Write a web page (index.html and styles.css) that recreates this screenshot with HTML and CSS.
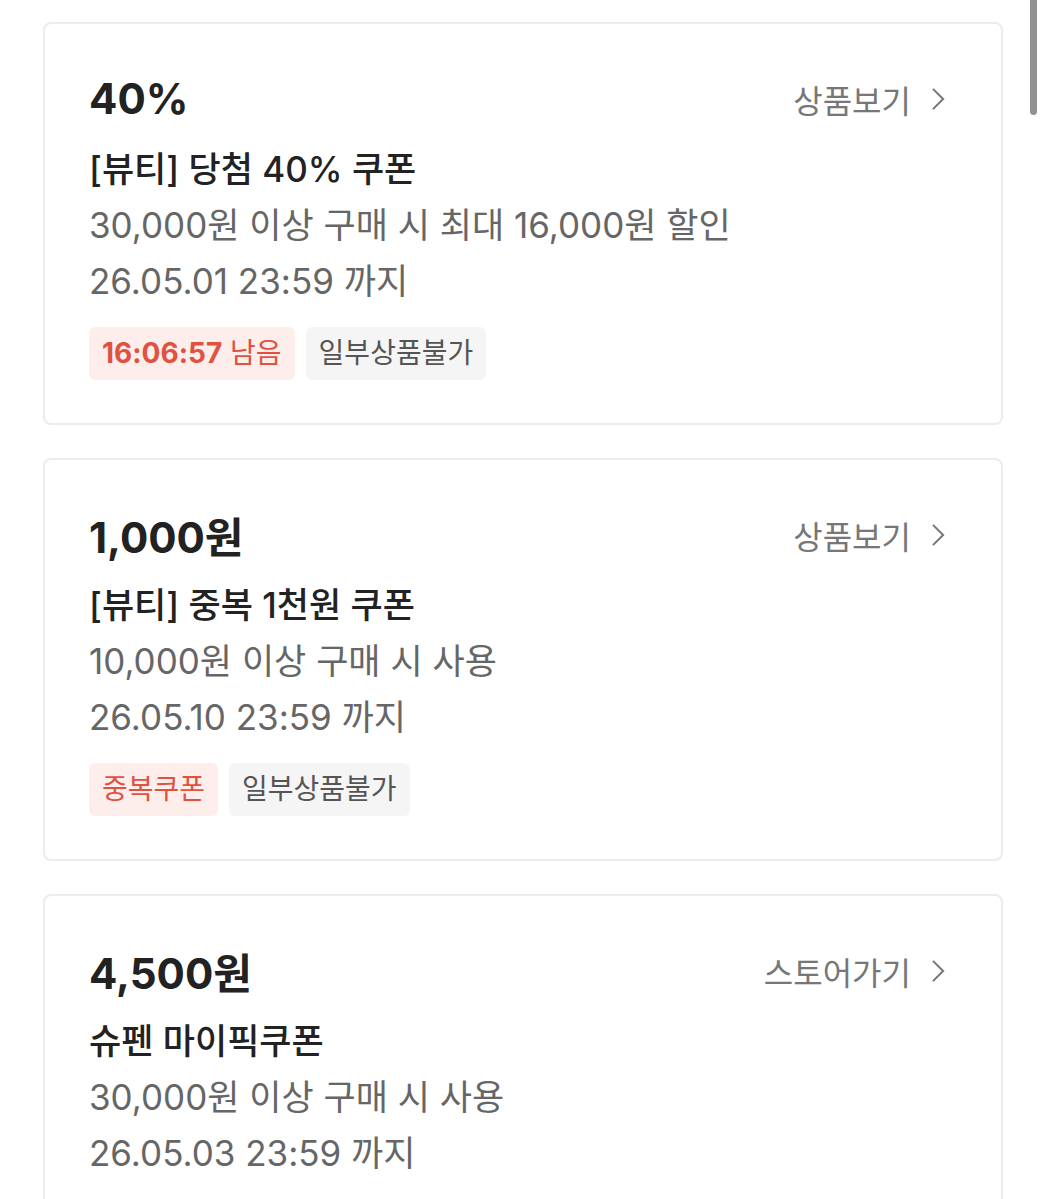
FILE: index.html
```html
<!DOCTYPE html>
<html lang="ko">
<head>
    <meta charset="UTF-8">
    <meta name="viewport" content="width=device-width, initial-scale=1.0">
    <title>쿠폰함</title>
    <link rel="stylesheet" href="styles.css">
</head>
<body>
    <div class="scrollbar"></div>
    <div class="coupon-list">
        <div class="coupon">
            <div class="coupon-head">
                <div class="amount">40%</div>
                <a class="link" href="#">상품보기
                    <svg class="chev" viewBox="0 0 16 26"><path d="M2 2 L13 13 L2 24" /></svg>
                </a>
            </div>
            <div class="title">[뷰티] 당첨 40% 쿠폰</div>
            <div class="desc">30,000원 이상 구매 시 최대 16,000원 할인</div>
            <div class="desc">26.05.01 23:59 까지</div>
            <div class="tags">
                <span class="tag tag-red"><b>16:06:57</b> 남음</span>
                <span class="tag">일부상품불가</span>
            </div>
        </div>

        <div class="coupon">
            <div class="coupon-head">
                <div class="amount">1,000원</div>
                <a class="link" href="#">상품보기
                    <svg class="chev" viewBox="0 0 16 26"><path d="M2 2 L13 13 L2 24" /></svg>
                </a>
            </div>
            <div class="title">[뷰티] 중복 1천원 쿠폰</div>
            <div class="desc">10,000원 이상 구매 시 사용</div>
            <div class="desc">26.05.10 23:59 까지</div>
            <div class="tags">
                <span class="tag tag-red">중복쿠폰</span>
                <span class="tag">일부상품불가</span>
            </div>
        </div>

        <div class="coupon">
            <div class="coupon-head">
                <div class="amount">4,500원</div>
                <a class="link" href="#">스토어가기
                    <svg class="chev" viewBox="0 0 16 26"><path d="M2 2 L13 13 L2 24" /></svg>
                </a>
            </div>
            <div class="title">슈펜 마이픽쿠폰</div>
            <div class="desc">30,000원 이상 구매 시 사용</div>
            <div class="desc">26.05.03 23:59 까지</div>
        </div>
    </div>
</body>
</html>
```

FILE: styles.css
```css
body {
    margin: 0;
    background: #fff;
    font-family: Inter, "Noto Sans CJK KR", sans-serif;
    color: #222;
    height: 1199px;
    overflow: hidden;
}
.scrollbar {
    position: fixed;
    top: 0;
    right: 9px;
    width: 7px;
    height: 115px;
    background: #929292;
    border-radius: 0 0 4px 4px;
}
.coupon-list {
    display: flex;
    flex-direction: column;
    gap: 33px;
    padding: 22px 43px;
}
.coupon {
    border: 2px solid #ececec;
    border-radius: 8px;
    padding: 46px 55px 43px 44px;
}
.coupon-head {
    display: flex;
    justify-content: space-between;
    align-items: center;
    height: 57px;
}
.amount {
    font-size: 42px;
    font-weight: 700;
}
.link {
    display: flex;
    align-items: center;
    gap: 20px;
    font-size: 32px;
    color: #777;
    text-decoration: none;
}
.chev {
    width: 15px;
    height: 24px;
}
.chev path {
    fill: none;
    stroke: #777;
    stroke-width: 2.2;
}
.title {
    margin-top: 14px;
    font-size: 35px;
    font-weight: 500;
    line-height: 56px;
}
.desc {
    font-size: 35px;
    line-height: 56px;
    color: #666;
}
.tags {
    display: flex;
    gap: 11px;
    margin-top: 18px;
}
.tag {
    height: 53px;
    line-height: 53px;
    padding: 0 13px;
    border-radius: 6px;
    background: #f5f5f5;
    color: #555;
    font-size: 28px;
}
.tag-red {
    background: #fdeeec;
    color: #e0513f;
}
.tag-red b {
    font-weight: 700;
}
```
